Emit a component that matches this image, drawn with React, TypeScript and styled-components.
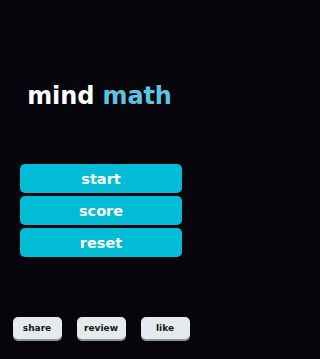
import styled, { createGlobalStyle } from 'styled-components';

const GlobalStyle = createGlobalStyle`
  html, body {
    margin: 0;
    padding: 0;
    background: #05050b;
  }
  body {
    font-family: "DejaVu Sans", "Noto Sans", sans-serif;
  }
`;

const Screen = styled.div`
  width: 202px;
  height: 359px;
  background: #05050b;
  display: flex;
  flex-direction: column;
  align-items: center;
  box-sizing: border-box;
  padding-top: 82px;
`;

const Title = styled.h1`
  margin: 0 3px 0 0;
  font-family: "DejaVu Sans", sans-serif;
  font-weight: 700;
  font-size: 24px;
  line-height: 28px;
  letter-spacing: -0.1px;
  color: #ffffff;
`;

const Accent = styled.span`
  color: #5cc4e2;
`;

const Menu = styled.div`
  display: flex;
  flex-direction: column;
  gap: 3px;
  width: 162px;
  margin-top: 54px;
`;

const MenuButton = styled.button`
  height: 29px;
  border: none;
  border-radius: 5px;
  background: #00bcd4;
  color: #ffffff;
  font-family: "DejaVu Sans", sans-serif;
  font-weight: 700;
  font-size: 14.5px;
  padding: 0;
`;

const Footer = styled.div`
  display: flex;
  gap: 15px;
  margin-top: auto;
  margin-bottom: 20px;
`;

const SmallButton = styled.button`
  width: 49px;
  height: 22px;
  border: none;
  border-radius: 5px;
  background: #e5eaed;
  box-shadow: 0 2px 0 #8c9599;
  color: #151515;
  font-family: "DejaVu Sans", sans-serif;
  font-weight: 700;
  font-size: 9px;
  padding: 0;
`;

export default function App() {
  return (
    <>
      <GlobalStyle />
      <Screen>
        <Title>
          mind <Accent>math</Accent>
        </Title>
        <Menu>
          <MenuButton>start</MenuButton>
          <MenuButton>score</MenuButton>
          <MenuButton>reset</MenuButton>
        </Menu>
        <Footer>
          <SmallButton>share</SmallButton>
          <SmallButton>review</SmallButton>
          <SmallButton>like</SmallButton>
        </Footer>
      </Screen>
    </>
  );
}
